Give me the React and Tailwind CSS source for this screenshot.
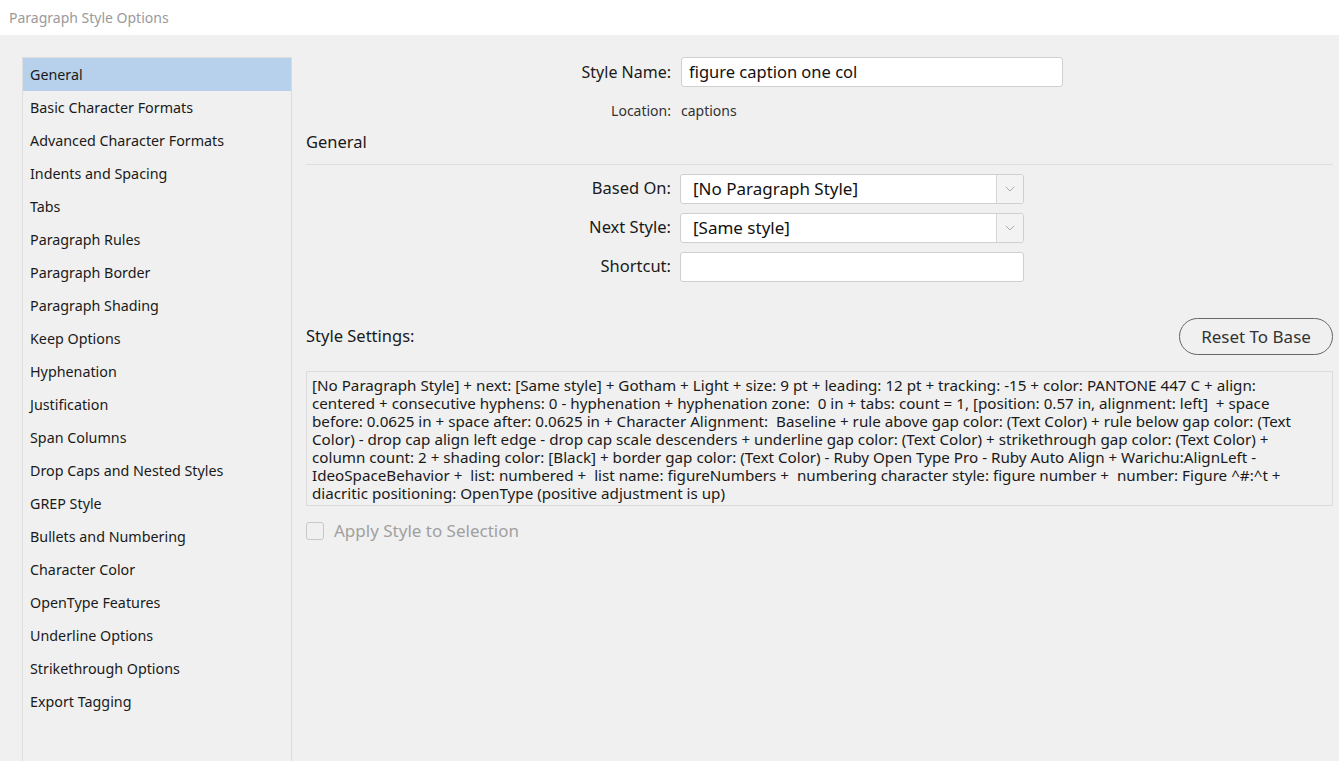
import { ChevronDown } from 'lucide-react';

const sections = [
  'General',
  'Basic Character Formats',
  'Advanced Character Formats',
  'Indents and Spacing',
  'Tabs',
  'Paragraph Rules',
  'Paragraph Border',
  'Paragraph Shading',
  'Keep Options',
  'Hyphenation',
  'Justification',
  'Span Columns',
  'Drop Caps and Nested Styles',
  'GREP Style',
  'Bullets and Numbering',
  'Character Color',
  'OpenType Features',
  'Underline Options',
  'Strikethrough Options',
  'Export Tagging',
];

const settingsLines = [
  '[No Paragraph Style] + next: [Same style] + Gotham + Light + size: 9 pt + leading: 12 pt + tracking: -15 + color: PANTONE 447 C + align:',
  'centered + consecutive hyphens: 0 - hyphenation + hyphenation zone:  0 in + tabs: count = 1, [position: 0.57 in, alignment: left]  + space',
  'before: 0.0625 in + space after: 0.0625 in + Character Alignment:  Baseline + rule above gap color: (Text Color) + rule below gap color: (Text',
  'Color) - drop cap align left edge - drop cap scale descenders + underline gap color: (Text Color) + strikethrough gap color: (Text Color) +',
  'column count: 2 + shading color: [Black] + border gap color: (Text Color) - Ruby Open Type Pro - Ruby Auto Align + Warichu:AlignLeft -',
  'IdeoSpaceBehavior +  list: numbered +  list name: figureNumbers +  numbering character style: figure number +  number: Figure ^#:^t +',
  'diacritic positioning: OpenType (positive adjustment is up)',
];

function Select({ value }) {
  return (
    <div className="flex h-[30px] w-[344px] rounded-[3px] border border-[#cfcfcf] bg-white">
      <div className="flex flex-1 items-center pl-3 text-[17px] text-[#111]">{value}</div>
      <div className="flex w-[27px] items-center justify-center rounded-r-[3px] border-l border-[#d6d6d6] bg-[#f3f3f3]">
        <ChevronDown size={16} strokeWidth={1} className="text-[#888]" />
      </div>
    </div>
  );
}

export default function App() {
  return (
    <div className="flex h-[761px] w-[1339px] flex-col overflow-hidden bg-[#f0f0f0] font-['Noto_Sans','Open_Sans',sans-serif] text-[#1a1a1a]">
      {/* Title bar */}
      <div className="flex h-[35px] items-center bg-white pl-[9px] text-[14px] text-[#9a9a9a]">
        Paragraph Style Options
      </div>

      <div className="flex flex-1 pt-[22px]">
        {/* Section list */}
        <div className="ml-[22px] w-[269px] border-l border-t border-[#dedede]">
          {sections.map((s, i) => (
            <div
              key={s}
              className={`flex h-[33px] items-center pl-[7px] text-[14.3px] ${i === 0 ? 'bg-[#b7d1ec]' : ''}`}
            >
              {s}
            </div>
          ))}
        </div>
        <div className="w-px bg-[#dcdcdc]" />

        {/* Main panel */}
        <div className="flex flex-1 flex-col pl-[14px] pr-[6px]">
          <div className="flex items-center">
            <div className="w-[375px] pr-[10px] text-right text-[16px]">Style Name:</div>
            <div className="flex h-[30px] w-[382px] items-center rounded-[3px] border border-[#cfcfcf] bg-white pl-[7px] text-[16.5px] text-[#111]">
              figure caption one col
            </div>
          </div>
          <div className="mt-[13px] flex items-center text-[14px] text-[#333]">
            <div className="w-[375px] pr-[10px] text-right">Location:</div>
            <div>captions</div>
          </div>

          <div className="mt-[9px] text-[16.5px]">General</div>
          <div className="mt-[9px] h-px bg-[#dedede]" />

          <div className="mt-[9px] flex flex-col gap-[9px]">
            <div className="flex items-center">
              <div className="w-[374px] pr-[9px] text-right text-[16.5px]">Based On:</div>
              <Select value="[No Paragraph Style]" />
            </div>
            <div className="flex items-center">
              <div className="w-[374px] pr-[9px] text-right text-[16.5px]">Next Style:</div>
              <Select value="[Same style]" />
            </div>
            <div className="flex items-center">
              <div className="w-[374px] pr-[9px] text-right text-[16.5px]">Shortcut:</div>
              <div className="h-[30px] w-[344px] rounded-[3px] border border-[#cfcfcf] bg-white" />
            </div>
          </div>

          <div className="mt-[36px] flex items-center justify-between">
            <div className="text-[16.5px]">Style Settings:</div>
            <button className="h-[37px] w-[154px] rounded-full border border-[#666] text-[17px] text-[#333]">
              Reset To Base
            </button>
          </div>

          <div className="mt-[16px] h-[135px] border border-[#dcdcdc] pl-[5px] pt-[4px] text-[15.2px] leading-[18px]">
            {settingsLines.map((l) => (
              <div key={l} className="whitespace-pre">
                {l}
              </div>
            ))}
          </div>

          <div className="mt-[12px] flex items-center gap-[10px]">
            <div className="h-[18px] w-[18px] rounded-[3px] border border-[#c8c8c8]" />
            <div className="text-[17px] text-[#a0a0a0]">Apply Style to Selection</div>
          </div>
        </div>
      </div>
    </div>
  );
}
